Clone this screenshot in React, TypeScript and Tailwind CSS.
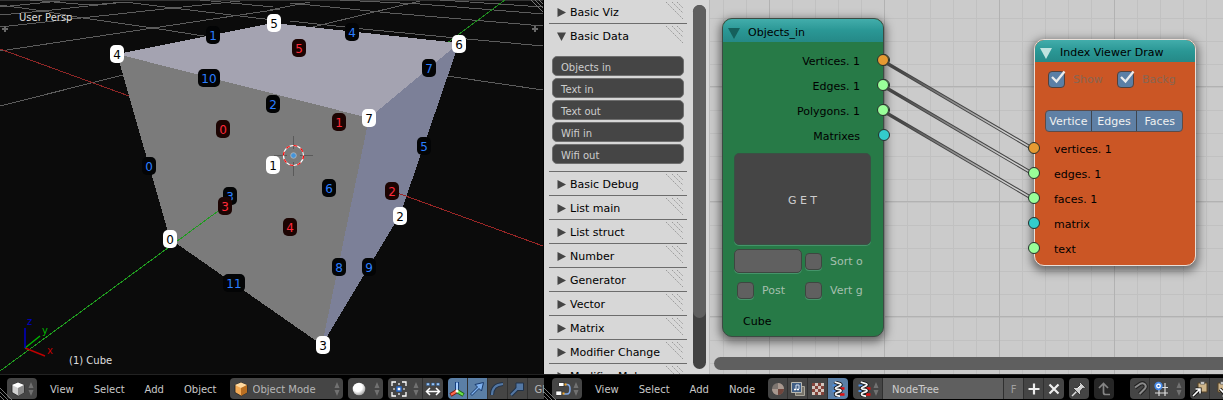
import type { ReactNode } from 'react';

type LabelKind = 'vertex' | 'edge' | 'face';

const labelColors: Record<LabelKind, { box: string; text: string }> = {
  vertex: { box: '#ffffff', text: '#000000' },
  edge: { box: '#030405', text: '#2a7fff' },
  face: { box: '#1c0402', text: '#ff2a3a' },
};

const indexLabels: [LabelKind, string, number, number][] = [
  ['vertex', '4', 117, 54],
  ['vertex', '5', 274, 23],
  ['vertex', '6', 459, 44],
  ['vertex', '7', 369, 118],
  ['vertex', '1', 273, 165],
  ['vertex', '0', 170, 239],
  ['vertex', '2', 400, 216],
  ['vertex', '3', 323, 345],
  ['edge', '1', 213, 35],
  ['edge', '4', 352, 32],
  ['edge', '10', 209, 78],
  ['edge', '2', 273, 104],
  ['edge', '7', 429, 68],
  ['edge', '5', 424, 146],
  ['edge', '0', 149, 166],
  ['edge', '3', 230, 196],
  ['edge', '6', 329, 188],
  ['edge', '8', 339, 267],
  ['edge', '9', 369, 267],
  ['edge', '11', 234, 283],
  ['face', '5', 299, 48],
  ['face', '0', 223, 129],
  ['face', '1', 339, 122],
  ['face', '3', 225, 206],
  ['face', '2', 392, 191],
  ['face', '4', 290, 227],
];

function Scene() {
  return (
    <svg
      viewBox="0 0 543 374"
      preserveAspectRatio="xMinYMin slice"
      className="block h-full w-full"
      role="img"
      aria-label="3D view of a cube with index labels"
    >
      <rect width="543" height="374" fill="#0b0b0b" />
      <g stroke="#5c5c5c" strokeWidth="1" shapeRendering="crispEdges" fill="none">
        <path d="M0 .5H543" stroke="#333" />
        <path d="M0 106 123 75M0 51 153 28 280 9M0 27 72 19 173 8 240 1M0 15 43 11 125 2M0 7 60 1" />
        <path d="M0 5 43 11 83 18 153 28 210 37M30 0 90 5 125 2 173 8 273 20M200 0 273 7" />
        <path d="M447 76 543 90M290 21 363 29 467 39 543 46M290 3 390 13 543 26M340 0 420 4 543 14M440 0 543 7" />
        <path d="M313 27 370 13 420 1M270 10 310 2" />
      </g>
      <g fill="none" strokeWidth="1" shapeRendering="crispEdges">
        <path d="M0 49 129 96" stroke="#8e2626" />
        <path d="M447 43 505 0" stroke="#1f8a1f" />
      </g>
      <g shapeRendering="crispEdges">
        <polygon points="117,54 273,23 459,43 369,118" fill="#a4a3b1" />
        <polygon points="117,54 369,118 322,345 170,239" fill="#7b7b7b" />
        <polygon points="369,118 459,43 400,215 322,345" fill="#7c8098" />
      </g>
      <g fill="none" strokeWidth="1" shapeRendering="crispEdges">
        <path d="M0 371 225 206" stroke="#1f9a1f" />
        <path d="M392 191 543 246" stroke="#9a2626" />
      </g>
      <path d="M293.5 136v13M293.5 162v14M274 155.5h13M300 155.5h13" stroke="#5a5a5a" />
      <circle cx="293.500" cy="155.500" r="10" fill="none" stroke="#fff" strokeWidth="1.200" />
      <circle cx="293.500" cy="155.500" r="10" fill="none" stroke="#f00" strokeWidth="1.200" strokeDasharray="3.900 3.900" />
      <circle cx="293.500" cy="155.500" r="2.800" fill="#4495dc" stroke="#b9b9b9" strokeWidth=".8" />
      <g className="font-['DejaVu_Sans',sans-serif] text-[12px]" textAnchor="middle">
        {indexLabels.map(([kind, text, x, y]) => {
          const width = text.length > 1 ? 22 : 14;
          return (
            <g key={kind + text}>
              <rect x={x - width / 2} y={y - 9} width={width} height="18" rx="5" fill={labelColors[kind].box} />
              <text x={x} y={y + 5} fill={labelColors[kind].text}>
                {text}
              </text>
            </g>
          );
        })}
      </g>
      <g fill="none" strokeWidth="1.500">
        <path d="M25 348 45 356" stroke="#c00000" />
        <path d="M25 348 40 336" stroke="#00b800" />
        <path d="M25 348V328" stroke="#0000c8" />
      </g>
      <g className="font-['DejaVu_Sans',sans-serif] text-[10px]">
        <text x="27" y="325" fill="#0000c8">z</text>
        <text x="42" y="334" fill="#00b800">y</text>
        <text x="47" y="354" fill="#c00000">x</text>
        <text x="19" y="21" fill="#dedede">User Persp</text>
        <text x="69" y="364" fill="#dedede">(1) Cube</text>
      </g>
      <path d="M2 29h6M5 26v6M532 29h6M535 26v6" stroke="#686868" strokeWidth="2" />
      <path d="M531 0l12 12M535 0l8 8M539 0l4 4" stroke="#777" strokeWidth="1" />
    </svg>
  );
}

function Icon({ children }: { children: ReactNode }) {
  return (
    <svg viewBox="0 0 16 16" className="size-4 shrink-0" fill="none" aria-hidden="true">
      {children}
    </svg>
  );
}

function CubeIcon({ top, left, right }: { top: string; left: string; right: string }) {
  return (
    <Icon>
      <path d="M8 1.500 14 4v7.500L8 15l-6-3.500V4z" fill={left} stroke="#222" strokeWidth=".8" />
      <path d="M8 1.500 14 4 8 7 2 4z" fill={top} />
      <path d="M14 4v7.500L8 15V7z" fill={right} />
    </Icon>
  );
}

function Stepper() {
  return (
    <svg viewBox="0 0 6 14" className="h-3.5 w-1.5 shrink-0" aria-hidden="true">
      <path d="M3 0 5.500 6H.5zM3 14 .5 8h5z" fill="#717171" />
    </svg>
  );
}

function HelixIcon() {
  return (
    <Icon>
      <path d="M2.500 4.500h5M2.500 10h5" stroke="#4e8fe0" strokeWidth="2" />
      <path d="M10 7.500h4.500M10 13.500h4.500" stroke="#e01010" strokeWidth="2.400" />
      <path d="M5 .8C6 2.500 11 2 11 3.800S5.500 5.500 5.500 7.200 11 8 11 9.800s-5.500 1.500-5.500 3.200C5.500 14.500 8 15 10 15.200" stroke="#111" strokeWidth="3.400" />
      <path d="M5 .8C6 2.500 11 2 11 3.800S5.500 5.500 5.500 7.200 11 8 11 9.800s-5.500 1.500-5.500 3.200C5.500 14.500 8 15 10 15.200" stroke="#f6f6f6" strokeWidth="1.800" />
    </Icon>
  );
}

function PasteIcon({ into }: { into: boolean }) {
  return (
    <Icon>
      <path d="M6 2h9v9H6z" fill="#cdb48a" stroke="#584526" />
      <path d="M8.500.8h4v2.400h-4z" fill="#ddd" stroke="#444" strokeWidth=".6" />
      <path d={into ? 'M1 15 8 8M3.500 8H8v4.500' : 'M8 8l7 7M15 10.500V15h-4.500'} stroke="#111" strokeWidth="3.200" />
      <path d={into ? 'M1 15 8 8M3.500 8H8v4.500' : 'M8 8l7 7M15 10.500V15h-4.500'} stroke="#fff" strokeWidth="1.600" />
    </Icon>
  );
}

function HeaderGrip() {
  return (
    <svg viewBox="0 0 12 12" className="absolute bottom-0 left-0 size-3" aria-hidden="true">
      <path d="M0 0l12 12M0 4l8 8M0 8l4 4" stroke="#777" strokeWidth="1" />
    </svg>
  );
}

function Segment({ label, active = false, children }: { label: string; active?: boolean; children: ReactNode }) {
  return (
    <button
      type="button"
      aria-label={label}
      aria-pressed={active}
      className={`flex h-[21px] w-5 shrink-0 items-center justify-center border-r border-[#303030] last:border-r-0 ${
        active ? 'bg-[#5b7fa6]' : 'bg-[#454545]'
      }`}
    >
      {children}
    </button>
  );
}

function Group({ children }: { children: ReactNode }) {
  return <div className="flex shrink-0 overflow-hidden rounded-[4px]">{children}</div>;
}

function DropButton({ label, wide = false, children }: { label: string; wide?: boolean; children: ReactNode }) {
  return (
    <button
      type="button"
      aria-label={label}
      className={`flex h-[21px] shrink-0 items-center justify-between border-r border-[#303030] bg-[#454545] px-[3px] last:border-r-0 ${
        wide ? 'w-[35px]' : 'w-[30px]'
      }`}
    >
      {children}
      <Stepper />
    </button>
  );
}

function Menus({ items }: { items: string[] }) {
  return (
    <nav className="ml-[13px] flex shrink-0 gap-5 text-[#c8c8c8]">
      {items.map((item) => (
        <button key={item} type="button" className="h-[21px] pt-0.5">
          {item}
        </button>
      ))}
    </nav>
  );
}

function ViewportHeader() {
  return (
    <div className="relative flex h-[26px] items-start overflow-hidden border-t border-[#222] bg-black pt-[3px] pl-[7px] text-[10px]">
      <Group>
        <DropButton label="Editor type: 3D View">
          <CubeIcon top="#fff" left="#d0d0d0" right="#8c8c8c" />
        </DropButton>
      </Group>
      <Menus items={['View', 'Select', 'Add', 'Object']} />
      <label className="relative ml-[13px] flex h-[21px] w-[113px] shrink-0 items-center rounded-[4px] bg-[#454545] px-[3px]">
        <CubeIcon top="#ffd9a0" left="#f3aa55" right="#b96f22" />
        <select aria-label="Mode" className="min-w-0 flex-1 appearance-none bg-transparent pt-0.5 pl-1 text-[#b5b5b5] outline-none">
          <option>Object Mode</option>
        </select>
        <Stepper />
      </label>
      <div className="ml-[5px] flex gap-[5px]">
        <Group>
          <DropButton label="Viewport shading" wide>
            <Icon>
              <defs>
                <radialGradient id="shade" cx=".4" cy=".35" r=".7">
                  <stop offset=".5" stopColor="#fff" />
                  <stop offset="1" stopColor="#999" />
                </radialGradient>
              </defs>
              <circle cx="8" cy="8" r="6.300" fill="url(#shade)" />
            </Icon>
          </DropButton>
        </Group>
        <Group>
          <DropButton label="Pivot point" wide>
            <Icon>
              <path d="M1 5V1h4M11 1h4v4M15 11v4h-4M5 15H1v-4" stroke="#fff" strokeWidth="1.300" />
              <path d="M8 2v2M8 12v2M2 8h2M12 8h2" stroke="#fff" strokeWidth="1.200" />
              <path d="M6 6h4v4H6z" fill="#fff" stroke="#2465c5" strokeWidth="1.400" />
            </Icon>
          </DropButton>
          <Segment label="Manipulate center points">
            <Icon>
              <path d="M1.500 2h3v2.500h-3zM6.500 2h3v2.500h-3zM11.500 2h3v2.500h-3z" fill="#9cc4f2" stroke="#24548c" strokeWidth=".5" />
              <path d="M1.500 10.500h13M5 7l-3.500 3.500L5 14M11 7l3.500 3.500L11 14" stroke="#fff" strokeWidth="1.500" />
            </Icon>
          </Segment>
        </Group>
        <Group>
          <Segment label="Use manipulator" active>
            <Icon>
              <path d="M8 9.500V1" stroke="#153f80" strokeWidth="4" />
              <path d="M8 9.500V1.500" stroke="#a8d0ff" strokeWidth="2" />
              <path d="M8 10 1.500 14" stroke="#791a10" strokeWidth="4" />
              <path d="M8 10 2 13.700" stroke="#ff6a50" strokeWidth="2.200" />
              <path d="m8 10 6.500 4" stroke="#1d6414" strokeWidth="4" />
              <path d="m8 10 6 3.700" stroke="#6be04b" strokeWidth="2.200" />
              <circle cx="8" cy="10" r="1.500" fill="#fff" />
            </Icon>
          </Segment>
          <Segment label="Translate" active>
            <Icon>
              <path d="M1.500 13 8.500 6 6 3.500 14.500 1.500 12.500 10 10 7.500 3 14.500z" fill="#7fb2f0" stroke="#17386b" />
            </Icon>
          </Segment>
          <Segment label="Rotate">
            <Icon>
              <path d="M3 14C3 7 7 3.500 14 3" stroke="#20324a" strokeWidth="4" />
              <path d="M3 14C3 7 7 3.500 14 3" stroke="#5478a4" strokeWidth="2.200" />
            </Icon>
          </Segment>
          <Segment label="Scale">
            <Icon>
              <path d="M2 14 9 7" stroke="#20324a" strokeWidth="4" />
              <path d="M7 2h7.500v7.500H7z" fill="#5478a4" stroke="#20324a" />
              <path d="M2 14 9 7" stroke="#5478a4" strokeWidth="2" />
            </Icon>
          </Segment>
          <button type="button" className="h-[21px] w-[70px] bg-[#454545] pt-0.5 pl-[7px] text-left text-[#b5b5b5]">
            Global
          </button>
        </Group>
      </div>
      <HeaderGrip />
    </div>
  );
}

function Hatch() {
  return (
    <svg viewBox="0 0 18 18" className="mr-1 ml-auto size-[18px] shrink-0 self-start" aria-hidden="true">
      <path d="M1 0l17 17M7 0l11 11M12 0l6 6" stroke="#999" strokeWidth="1" strokeDasharray="1.500 1" />
    </svg>
  );
}

function PanelHeading({ title, open = false }: { title: string; open?: boolean }) {
  return (
    <button type="button" aria-expanded={open} className="flex h-[23px] w-full items-center pt-0.5 pl-2 text-[11px] text-black">
      <svg viewBox="0 0 9 9" className="mr-1 size-[9px]" aria-hidden="true">
        <path d={open ? 'M0 .5h9L4.500 9z' : 'M.5 0v9L9 4.500z'} fill="#444" />
      </svg>
      <span className="pt-0.5">{title}</span>
      <Hatch />
    </button>
  );
}

const dataNodes = ['Objects in', 'Text in', 'Text out', 'Wifi in', 'Wifi out'];
const closedPanels = [
  'Basic Debug',
  'List main',
  'List struct',
  'Number',
  'Generator',
  'Vector',
  'Matrix',
  'Modifier Change',
  'Modifier Make',
];

function ToolShelf() {
  return (
    <aside className="flex w-[166px] shrink-0 overflow-hidden border-r border-[#bcbcbc] bg-[#d7d7d7] pl-[5px]">
      <div className="w-[138px]">
        <section className="border-b border-[#6c6c6c]">
          <PanelHeading title="Basic Viz" />
        </section>
        <section className="border-b border-[#6c6c6c]">
          <PanelHeading title="Basic Data" open />
          <div className="flex flex-col gap-0.5 px-[3px] pt-[9px] pb-[7px]">
            {dataNodes.map((name) => (
              <button
                key={name}
                type="button"
                className="h-5 rounded-[5px] border border-[#6f6f6f] bg-[#454545] px-2 pt-0.5 text-left text-[10px] text-[#cdcdcd]"
              >
                {name}
              </button>
            ))}
          </div>
        </section>
        {closedPanels.map((title) => (
          <section key={title} className="border-b border-[#6c6c6c]">
            <PanelHeading title={title} />
          </section>
        ))}
      </div>
      <div className="my-[5px] ml-1.5 w-[13px] rounded-full bg-[#424242]">
        <div className="h-[86%] rounded-full bg-[#5f5f5f]" />
      </div>
    </aside>
  );
}

const socketColors = {
  orange: 'bg-[#e69a32]',
  green: 'bg-[#99ff99]',
  cyan: 'bg-[#33cccc]',
};
type SocketColor = keyof typeof socketColors;

function SocketRow({ name, color, side }: { name: string; color: SocketColor; side: 'in' | 'out' }) {
  return (
    <li className={`relative flex h-[25px] items-center pt-0.5 ${side === 'out' ? 'justify-end pr-[23px]' : 'pl-[19px]'}`}>
      {name}
      <span
        className={`absolute top-[5px] size-3 rounded-full border border-[#26302c] ${socketColors[color]} ${
          side === 'out' ? '-right-[7px]' : '-left-[7px]'
        }`}
      />
    </li>
  );
}

function NodeCheck({ label }: { label: string }) {
  return (
    <label className="flex items-center gap-2 text-[#a5bfae]">
      <input
        type="checkbox"
        className="size-[17px] shrink-0 appearance-none rounded-[4px] border border-[#3d4740] bg-[#606060] shadow-[0_1px_0_#45946a]"
      />
      <span className="pt-0.5">{label}</span>
    </label>
  );
}

function TickedCheck({ label }: { label: string }) {
  return (
    <label className="relative flex h-[17px] w-[69px] items-center gap-2 text-[#886552]">
      <input
        type="checkbox"
        defaultChecked
        className="size-[17px] shrink-0 appearance-none rounded-[4px] border border-[#52413c] bg-[#5b7fa6]"
      />
      <svg viewBox="0 0 17 17" className="absolute top-0 left-0 size-[17px] overflow-visible" aria-hidden="true">
        <path d="M4 6l4.500 4.500L16.500.5" fill="none" stroke="#ececec" strokeWidth="2.300" />
      </svg>
      <span className="pt-0.5">{label}</span>
    </label>
  );
}

function ObjectsInNode() {
  return (
    <article className="absolute top-[18px] left-3 w-[162px] rounded-[10px] border border-[#3c4b43] bg-[#277a47] pb-[5px] text-[11px] text-black shadow-[0_3px_10px_2px_rgba(0,0,0,0.5)]">
      <h2 className="flex h-[23px] items-center gap-2 rounded-t-[9px] bg-linear-to-b from-[#42adab] via-[#2a9795] to-[#258987] pt-1.5 pl-[5px]">
        <svg viewBox="0 0 12 11" className="h-[11px] w-3" aria-hidden="true">
          <path d="M0 0h12L6 11z" fill="#15605c" />
        </svg>
        Objects_in
      </h2>
      <ul className="pt-[7px]">
        <SocketRow name="Vertices. 1" color="orange" side="out" />
        <SocketRow name="Edges. 1" color="green" side="out" />
        <SocketRow name="Polygons. 1" color="green" side="out" />
        <SocketRow name="Matrixes" color="cyan" side="out" />
      </ul>
      <div className="flex flex-col pt-1 pr-3 pl-[11px]">
        <button
          type="button"
          className="h-[92px] rounded-[5px] border border-[#3a5044] bg-[#454545] pt-1 text-[#cdcdcd] shadow-[0_1px_0_#45946a]"
        >
          G E T
        </button>
        <div className="mt-1 grid grid-cols-[68px_1fr] items-center gap-x-[3px]">
          <input
            aria-label="Group name"
            className="h-6 w-full rounded-[5px] border border-[#3d4740] bg-[#606060] px-1 shadow-[0_1px_0_#45946a] outline-none"
          />
          <NodeCheck label="Sort o" />
        </div>
        <div className="mt-2 grid grid-cols-[68px_1fr] items-center gap-x-[3px]">
          <div className="pl-[3px]">
            <NodeCheck label="Post" />
          </div>
          <NodeCheck label="Vert g" />
        </div>
        <p className="mt-[13px] pl-[9px] leading-[18px]">Cube</p>
      </div>
    </article>
  );
}

function IndexViewerNode() {
  return (
    <article className="absolute top-[39px] left-[324px] w-[162px] rounded-[10px] border border-[#eadfd8] bg-[#cb5625] pb-[3px] text-[11px] text-black shadow-[0_3px_10px_2px_rgba(0,0,0,0.5)]">
      <h2 className="flex h-[22px] items-center gap-2 rounded-t-[9px] bg-linear-to-b from-[#42adab] via-[#2a9795] to-[#258987] pt-1 pl-[5px]">
        <svg viewBox="0 0 12 11" className="h-[11px] w-3" aria-hidden="true">
          <path d="M0 0h12L6 11z" fill="#bfe3df" />
        </svg>
        Index Viewer Draw
      </h2>
      <div className="flex pt-[9px] pl-[13px]">
        <TickedCheck label="Show" />
        <TickedCheck label="Backg" />
      </div>
      <div className="mt-[22px] mr-3 ml-2.5 flex h-[22px] divide-x divide-[#3e4650] overflow-hidden rounded-[4px] border border-[#5c4b48] bg-[#5f80a5] text-[#f0f0f0]">
        <button type="button" className="flex-1 pt-[3px]">
          Vertice
        </button>
        <button type="button" className="flex-1 pt-[3px]">
          Edges
        </button>
        <button type="button" className="flex-1 pt-[3px]">
          Faces
        </button>
      </div>
      <ul className="pt-[5px]">
        <SocketRow name="vertices. 1" color="orange" side="in" />
        <SocketRow name="edges. 1" color="green" side="in" />
        <SocketRow name="faces. 1" color="green" side="in" />
        <SocketRow name="matrix" color="cyan" side="in" />
        <SocketRow name="text" color="green" side="in" />
      </ul>
    </article>
  );
}

const wires = [
  'M173 61 325 150',
  'M173 86 325 175',
  'M173 111 325 200',
];

function NodeCanvas() {
  return (
    <div className="relative min-w-0 flex-1 overflow-hidden bg-[#cbcbcb]">
      <svg className="absolute inset-0 size-full" aria-hidden="true">
        <defs>
          <pattern id="minor" x="13" y="18" width="23" height="23" patternUnits="userSpaceOnUse">
            <path d="M.5 0v23M0 .5h23" stroke="#c1c1c1" />
          </pattern>
          <pattern id="major" x="59" y="86" width="115" height="115" patternUnits="userSpaceOnUse">
            <path d="M.5 0v115M0 .5h115" stroke="#b2b2b2" />
          </pattern>
          <linearGradient id="wireCore" gradientUnits="userSpaceOnUse" x1="173" y1="0" x2="325" y2="0">
            <stop offset=".1" stopColor="#444" />
            <stop offset=".8" stopColor="#cfcfcf" />
          </linearGradient>
        </defs>
        <rect width="100%" height="100%" fill="url(#minor)" />
        <rect width="100%" height="100%" fill="url(#major)" />
      </svg>
      <ObjectsInNode />
      <svg className="absolute inset-0 size-full" aria-hidden="true">
        {wires.map((d) => (
          <g key={d} fill="none">
            <path d={d} stroke="#444" strokeWidth="3.500" />
            <path d={d} stroke="url(#wireCore)" strokeWidth="1.500" />
          </g>
        ))}
        <g stroke="#26302c">
          <circle cx="173" cy="60" r="5.500" fill="#e69a32" />
          <circle cx="173" cy="85" r="5.500" fill="#99ff99" />
          <circle cx="173" cy="110" r="5.500" fill="#99ff99" />
        </g>
      </svg>
      <IndexViewerNode />
      <div className="absolute right-0 bottom-1 left-1 h-[13px] rounded-l-full bg-[#5f5f5f]" />
    </div>
  );
}

function NodeHeader() {
  return (
    <div className="relative flex h-[26px] items-start overflow-hidden border-t border-[#222] bg-black pt-[3px] pl-2 text-[10px]">
      <Group>
        <DropButton label="Editor type: Node Editor">
          <Icon>
            <path d="M10 3.500h2c2 0 3 1 3 4.500s-1 5-3 5H8.500" stroke="#7fa8e8" strokeWidth="1.500" />
            <path d="M3.500 1.500h5.500v4H3.500zM.8 10h6v4.500h-6z" fill="#fff" stroke="#222" strokeWidth=".8" />
            <path d="M9.500 3.500h2M7.500 12.500h2" stroke="#f5a623" strokeWidth="2" />
          </Icon>
        </DropButton>
      </Group>
      <Menus items={['View', 'Select', 'Add', 'Node']} />
      <div className="ml-[13px] flex shrink-0 gap-[5px]">
        <Group>
          <Segment label="Shader nodes">
            <Icon>
              <circle cx="8" cy="8" r="6" fill="#7d7570" />
              <path d="M8 2a6 6 0 0 1 6 6H8zM2 8h6v6a6 6 0 0 1-6-6z" fill="#a8988f" />
              <path d="M8 8h6a6 6 0 0 1-6 6z" fill="#70453c" />
            </Icon>
          </Segment>
          <Segment label="Compositing nodes">
            <Icon>
              <path d="M5.500 5.500h9v9h-9z" fill="#77736a" stroke="#aaa79c" />
              <path d="M1.500 1.500h10v10h-10z" fill="#426087" stroke="#b8b8b0" />
              <path d="M6 9V4h3v4" stroke="#d8e4f4" />
              <path d="M4 8.500h2M7 8.500h2" stroke="#fff" strokeWidth="1.500" />
            </Icon>
          </Segment>
          <Segment label="Texture nodes">
            <Icon>
              <path d="M2 2h12v12H2z" fill="#d2c5bd" />
              <path
                d="M2 2h3v3H2zM8 2h3v3H8zM5 5h3v3H5zM11 5h3v3h-3zM2 8h3v3H2zM8 8h3v3H8zM5 11h3v3H5zM11 11h3v3h-3z"
                fill="#85443b"
              />
            </Icon>
          </Segment>
          <Segment label="Sverchok nodes" active>
            <HelixIcon />
          </Segment>
        </Group>
        <Group>
          <DropButton label="Browse node tree">
            <HelixIcon />
          </DropButton>
          <input
            aria-label="Node tree name"
            defaultValue="NodeTree"
            className="h-[21px] w-[121px] border-r border-[#303030] bg-[#5f5f5f] pt-0.5 pl-[9px] text-[#cdcdcd] outline-none"
          />
          <button
            type="button"
            aria-label="Fake user"
            className="h-[21px] w-5 border-r border-[#303030] bg-[#5a5a5a] pt-0.5 text-[#a0a0a0]"
          >
            F
          </button>
          <Segment label="Add node tree">
            <Icon>
              <path d="M8 2.500v11M2.500 8h11" stroke="#eee" strokeWidth="2.200" />
            </Icon>
          </Segment>
          <Segment label="Unlink">
            <Icon>
              <path d="M3.500 3.500l9 9M12.500 3.500l-9 9" stroke="#eee" strokeWidth="2.200" />
            </Icon>
          </Segment>
        </Group>
        <Group>
          <Segment label="Pin">
            <Icon>
              <path d="M1 15 6 10" stroke="#ddd" strokeWidth="1.500" />
              <path d="M9.500 1.500 14.500 6.500 13 7.500 12 7 9.500 9.800 9.500 12.500 8.500 13.500 2.500 7.500 3.500 6.500 6.500 6.500 9 4 8.500 2.500z" fill="#d0d0d0" stroke="#222" strokeWidth=".8" />
              <path d="M9.500 4.500 6.500 7.500" stroke="#fff" />
            </Icon>
          </Segment>
        </Group>
        <button
          type="button"
          aria-label="Go to parent"
          className="flex h-[21px] w-5 shrink-0 items-center justify-center rounded-[4px] bg-[#262626]"
        >
          <Icon>
            <path d="M14 13.500H9.500c-1.500 0-2-.5-2-2V3M3 7l4.500-4.500L12 7" stroke="#858585" strokeWidth="1.700" />
          </Icon>
        </button>
      </div>
      <div className="ml-4 flex shrink-0 gap-[5px]">
        <Group>
          <Segment label="Snap">
            <Icon>
              <path d="M3 6.500 8 3c4-2.500 7.500 2 4.500 5L7.500 13" stroke="#222" strokeWidth="4" />
              <path d="M3 6.500 8 3c4-2.500 7.500 2 4.500 5L7.500 13" stroke="#8b8b8b" strokeWidth="2" />
            </Icon>
          </Segment>
          <DropButton label="Snap element" wide>
            <Icon>
              <path d="M2 6.500h13M2 12h13M6 2v13M12 2v13" stroke="#dedede" strokeWidth="1.200" />
              <circle cx="5.500" cy="5" r="3.300" fill="#fff" stroke="#4589e8" strokeWidth="1.700" />
              <circle cx="5.500" cy="5" r="1.100" fill="#1e62c9" />
            </Icon>
          </DropButton>
        </Group>
        <Group>
          <Segment label="Copy">
            <PasteIcon into />
          </Segment>
          <Segment label="Paste">
            <PasteIcon into={false} />
          </Segment>
        </Group>
      </div>
      <HeaderGrip />
    </div>
  );
}

export default function App() {
  return (
    <main className="grid h-screen grid-cols-[544fr_679fr] overflow-hidden bg-black font-['DejaVu_Sans',sans-serif]">
      <section className="flex min-w-0 flex-col overflow-hidden">
        <div className="min-h-0 flex-1 border-r border-black">
          <Scene />
        </div>
        <ViewportHeader />
      </section>
      <section className="flex min-w-0 flex-col overflow-hidden">
        <div className="flex min-h-0 flex-1">
          <ToolShelf />
          <NodeCanvas />
        </div>
        <NodeHeader />
      </section>
    </main>
  );
}
